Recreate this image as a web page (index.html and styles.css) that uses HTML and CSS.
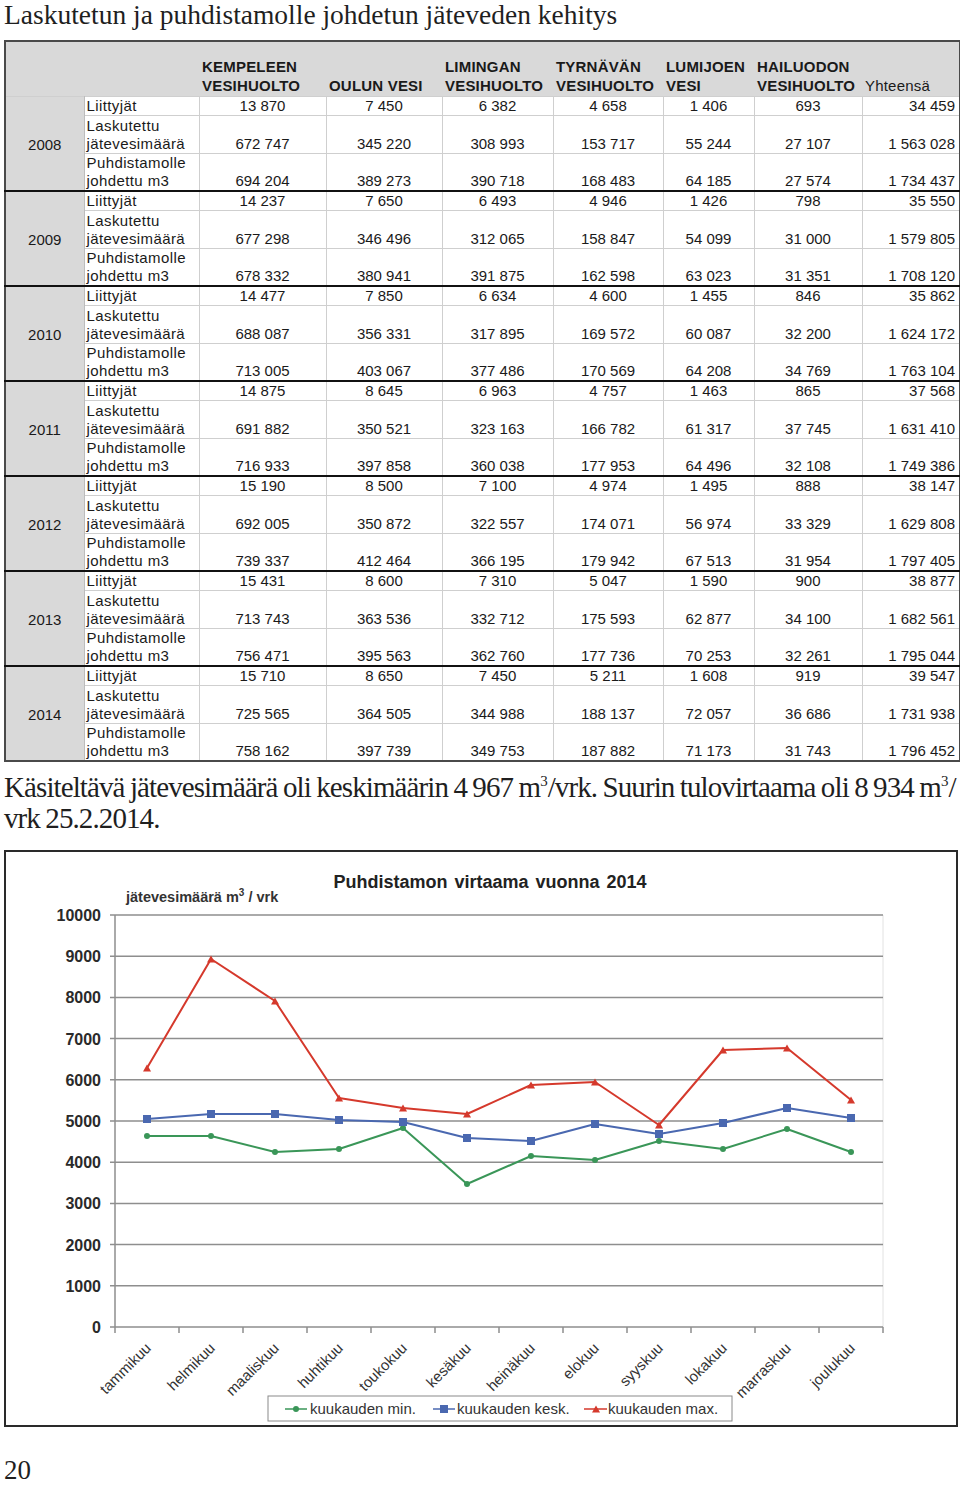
FILE: index.html
```html
<!DOCTYPE html>
<html lang="fi">
<head>
<meta charset="utf-8">
<title>Laskutetun ja puhdistamolle johdetun jäteveden kehitys</title>
<link rel="stylesheet" href="styles.css">
</head>
<body>
<div class="page">
  <h1 class="title">Laskutetun ja puhdistamolle johdetun jäteveden kehitys</h1>

  <table class="data">
    <colgroup>
      <col class="c-year"><col class="c-lbl"><col class="c-kem"><col class="c-oul"><col class="c-lim"><col class="c-tyr"><col class="c-lum"><col class="c-hai"><col class="c-tot">
    </colgroup>
    <thead>
      <tr>
        <th></th><th></th>
        <th>KEMPELEEN<br>VESIHUOLTO</th>
        <th>OULUN VESI</th>
        <th>LIMINGAN<br>VESIHUOLTO</th>
        <th>TYRNÄVÄN<br>VESIHUOLTO</th>
        <th>LUMIJOEN<br>VESI</th>
        <th>HAILUODON<br>VESIHUOLTO</th>
        <th class="tot-h">Yhteensä</th>
      </tr>
    </thead>
    <tbody class="grp">
      <tr class="r1"><td class="yr" rowspan="3">2008</td><td class="lbl">Liittyjät</td><td>13 870</td><td>7 450</td><td>6 382</td><td>4 658</td><td>1 406</td><td>693</td><td class="tot">34 459</td></tr>
      <tr class="r2"><td class="lbl">Laskutettu<br>jätevesimäärä</td><td>672 747</td><td>345 220</td><td>308 993</td><td>153 717</td><td>55 244</td><td>27 107</td><td class="tot">1 563 028</td></tr>
      <tr class="r3"><td class="lbl">Puhdistamolle<br>johdettu m3</td><td>694 204</td><td>389 273</td><td>390 718</td><td>168 483</td><td>64 185</td><td>27 574</td><td class="tot">1 734 437</td></tr>
    </tbody>
    <tbody class="grp">
      <tr class="r1"><td class="yr" rowspan="3">2009</td><td class="lbl">Liittyjät</td><td>14 237</td><td>7 650</td><td>6 493</td><td>4 946</td><td>1 426</td><td>798</td><td class="tot">35 550</td></tr>
      <tr class="r2"><td class="lbl">Laskutettu<br>jätevesimäärä</td><td>677 298</td><td>346 496</td><td>312 065</td><td>158 847</td><td>54 099</td><td>31 000</td><td class="tot">1 579 805</td></tr>
      <tr class="r3"><td class="lbl">Puhdistamolle<br>johdettu m3</td><td>678 332</td><td>380 941</td><td>391 875</td><td>162 598</td><td>63 023</td><td>31 351</td><td class="tot">1 708 120</td></tr>
    </tbody>
    <tbody class="grp">
      <tr class="r1"><td class="yr" rowspan="3">2010</td><td class="lbl">Liittyjät</td><td>14 477</td><td>7 850</td><td>6 634</td><td>4 600</td><td>1 455</td><td>846</td><td class="tot">35 862</td></tr>
      <tr class="r2"><td class="lbl">Laskutettu<br>jätevesimäärä</td><td>688 087</td><td>356 331</td><td>317 895</td><td>169 572</td><td>60 087</td><td>32 200</td><td class="tot">1 624 172</td></tr>
      <tr class="r3"><td class="lbl">Puhdistamolle<br>johdettu m3</td><td>713 005</td><td>403 067</td><td>377 486</td><td>170 569</td><td>64 208</td><td>34 769</td><td class="tot">1 763 104</td></tr>
    </tbody>
    <tbody class="grp">
      <tr class="r1"><td class="yr" rowspan="3">2011</td><td class="lbl">Liittyjät</td><td>14 875</td><td>8 645</td><td>6 963</td><td>4 757</td><td>1 463</td><td>865</td><td class="tot">37 568</td></tr>
      <tr class="r2"><td class="lbl">Laskutettu<br>jätevesimäärä</td><td>691 882</td><td>350 521</td><td>323 163</td><td>166 782</td><td>61 317</td><td>37 745</td><td class="tot">1 631 410</td></tr>
      <tr class="r3"><td class="lbl">Puhdistamolle<br>johdettu m3</td><td>716 933</td><td>397 858</td><td>360 038</td><td>177 953</td><td>64 496</td><td>32 108</td><td class="tot">1 749 386</td></tr>
    </tbody>
    <tbody class="grp">
      <tr class="r1"><td class="yr" rowspan="3">2012</td><td class="lbl">Liittyjät</td><td>15 190</td><td>8 500</td><td>7 100</td><td>4 974</td><td>1 495</td><td>888</td><td class="tot">38 147</td></tr>
      <tr class="r2"><td class="lbl">Laskutettu<br>jätevesimäärä</td><td>692 005</td><td>350 872</td><td>322 557</td><td>174 071</td><td>56 974</td><td>33 329</td><td class="tot">1 629 808</td></tr>
      <tr class="r3"><td class="lbl">Puhdistamolle<br>johdettu m3</td><td>739 337</td><td>412 464</td><td>366 195</td><td>179 942</td><td>67 513</td><td>31 954</td><td class="tot">1 797 405</td></tr>
    </tbody>
    <tbody class="grp">
      <tr class="r1"><td class="yr" rowspan="3">2013</td><td class="lbl">Liittyjät</td><td>15 431</td><td>8 600</td><td>7 310</td><td>5 047</td><td>1 590</td><td>900</td><td class="tot">38 877</td></tr>
      <tr class="r2"><td class="lbl">Laskutettu<br>jätevesimäärä</td><td>713 743</td><td>363 536</td><td>332 712</td><td>175 593</td><td>62 877</td><td>34 100</td><td class="tot">1 682 561</td></tr>
      <tr class="r3"><td class="lbl">Puhdistamolle<br>johdettu m3</td><td>756 471</td><td>395 563</td><td>362 760</td><td>177 736</td><td>70 253</td><td>32 261</td><td class="tot">1 795 044</td></tr>
    </tbody>
    <tbody class="grp">
      <tr class="r1"><td class="yr" rowspan="3">2014</td><td class="lbl">Liittyjät</td><td>15 710</td><td>8 650</td><td>7 450</td><td>5 211</td><td>1 608</td><td>919</td><td class="tot">39 547</td></tr>
      <tr class="r2"><td class="lbl">Laskutettu<br>jätevesimäärä</td><td>725 565</td><td>364 505</td><td>344 988</td><td>188 137</td><td>72 057</td><td>36 686</td><td class="tot">1 731 938</td></tr>
      <tr class="r3"><td class="lbl">Puhdistamolle<br>johdettu m3</td><td>758 162</td><td>397 739</td><td>349 753</td><td>187 882</td><td>71 173</td><td>31 743</td><td class="tot">1 796 452</td></tr>
    </tbody>
  </table>

  <p class="note"><span class="l1">Käsiteltävä jätevesimäärä oli keskimäärin 4 967 m<span class="sup">3</span>/vrk. Suurin tulovirtaama oli 8 934 m<span class="sup">3</span>/</span><br>vrk 25.2.2014.</p>

  <div class="chart">
    <svg class="plot" width="950" height="573" viewBox="6 853 950 573" xmlns="http://www.w3.org/2000/svg">
      <defs>
        <marker id="mk-tri" viewBox="0 0 10 10" refX="5" refY="5" markerWidth="9" markerHeight="9" markerUnits="userSpaceOnUse">
          <polygon points="5,1 9.5,9 0.5,9" fill="#d5392c"/>
        </marker>
        <marker id="mk-sq" viewBox="0 0 10 10" refX="5" refY="5" markerWidth="8" markerHeight="8" markerUnits="userSpaceOnUse">
          <rect x="0" y="0" width="10" height="10" fill="#4a68b0"/>
        </marker>
        <marker id="mk-dot" viewBox="0 0 10 10" refX="5" refY="5" markerWidth="6" markerHeight="6" markerUnits="userSpaceOnUse">
          <circle cx="5" cy="5" r="5" fill="#3a9658"/>
        </marker>
      </defs>

      <text class="ctitle" x="490" y="889" text-anchor="middle">Puhdistamon virtaama vuonna 2014</text>
      <text class="ylabel" x="126" y="903">jätevesimäärä m<tspan class="ysup" dy="-6">3</tspan><tspan dy="6"> / vrk</tspan></text>

      <line class="frame-r" x1="883" y1="916" x2="883" y2="1328"/>
      <g class="grid">
        <line x1="110" y1="916" x2="883" y2="916"/>
        <line x1="110" y1="957.2" x2="883" y2="957.2"/>
        <line x1="110" y1="998.4" x2="883" y2="998.4"/>
        <line x1="110" y1="1039.6" x2="883" y2="1039.6"/>
        <line x1="110" y1="1080.8" x2="883" y2="1080.8"/>
        <line x1="110" y1="1122" x2="883" y2="1122"/>
        <line x1="110" y1="1163.2" x2="883" y2="1163.2"/>
        <line x1="110" y1="1204.4" x2="883" y2="1204.4"/>
        <line x1="110" y1="1245.6" x2="883" y2="1245.6"/>
        <line x1="110" y1="1286.8" x2="883" y2="1286.8"/>
        <line x1="110" y1="1328" x2="883" y2="1328"/>
        <line x1="115" y1="916" x2="115" y2="1328"/>
      </g>
      <g class="ticks">
        <line x1="115" y1="1328" x2="115" y2="1334"/>
        <line x1="179" y1="1328" x2="179" y2="1334"/>
        <line x1="243" y1="1328" x2="243" y2="1334"/>
        <line x1="307" y1="1328" x2="307" y2="1334"/>
        <line x1="371" y1="1328" x2="371" y2="1334"/>
        <line x1="435" y1="1328" x2="435" y2="1334"/>
        <line x1="499" y1="1328" x2="499" y2="1334"/>
        <line x1="563" y1="1328" x2="563" y2="1334"/>
        <line x1="627" y1="1328" x2="627" y2="1334"/>
        <line x1="691" y1="1328" x2="691" y2="1334"/>
        <line x1="755" y1="1328" x2="755" y2="1334"/>
        <line x1="819" y1="1328" x2="819" y2="1334"/>
        <line x1="883" y1="1328" x2="883" y2="1334"/>
      </g>
      <g class="ytext">
        <text x="101" y="922">10000</text>
        <text x="101" y="963">9000</text>
        <text x="101" y="1004">8000</text>
        <text x="101" y="1046">7000</text>
        <text x="101" y="1087">6000</text>
        <text x="101" y="1128">5000</text>
        <text x="101" y="1169">4000</text>
        <text x="101" y="1210">3000</text>
        <text x="101" y="1252">2000</text>
        <text x="101" y="1293">1000</text>
        <text x="101" y="1334">0</text>
      </g>
      <g class="xtext">
        <text transform="translate(152 1350) rotate(-45)">tammikuu</text>
        <text transform="translate(216 1350) rotate(-45)">helmikuu</text>
        <text transform="translate(280 1350) rotate(-45)">maaliskuu</text>
        <text transform="translate(344 1350) rotate(-45)">huhtikuu</text>
        <text transform="translate(408 1350) rotate(-45)">toukokuu</text>
        <text transform="translate(472 1350) rotate(-45)">kesäkuu</text>
        <text transform="translate(536 1350) rotate(-45)">heinäkuu</text>
        <text transform="translate(600 1350) rotate(-45)">elokuu</text>
        <text transform="translate(664 1350) rotate(-45)">syyskuu</text>
        <text transform="translate(728 1350) rotate(-45)">lokakuu</text>
        <text transform="translate(792 1350) rotate(-45)">marraskuu</text>
        <text transform="translate(856 1350) rotate(-45)">joulukuu</text>
      </g>

      <polyline class="s-min" points="147,1137 211,1137 275,1153 339,1150 403,1129 467,1185 531,1157 595,1161 659,1142 723,1150 787,1130 851,1153"/>
      <polyline class="s-avg" points="147,1120 211,1115 275,1115 339,1121 403,1123 467,1139 531,1142 595,1125 659,1135 723,1124 787,1109 851,1119"/>
      <polyline class="s-max" points="147,1069 211,960 275,1002 339,1099 403,1109 467,1115 531,1086 595,1083 659,1126 723,1051 787,1049 851,1101"/>

      <rect class="legend-box" x="268" y="1397" width="464" height="25"/>
      <polyline class="s-min lg" points="285,1410 296,1410 307,1410"/>
      <text class="lgtext" x="310" y="1415">kuukauden min.</text>
      <polyline class="s-avg lg" points="433,1410 444,1410 455,1410"/>
      <text class="lgtext" x="457" y="1415">kuukauden kesk.</text>
      <polyline class="s-max lg" points="584,1410 596,1410 607,1410"/>
      <text class="lgtext" x="608" y="1415">kuukauden max.</text>
    </svg>
  </div>

  <div class="pageno">20</div>
</div>
</body>
</html>
```

FILE: styles.css
```css
html, body {
  margin: 0;
  padding: 0;
  background: #ffffff;
}

body {
  font-family: "Liberation Sans", Arial, sans-serif;
  color: #1e1e1e;
}

.page {
  width: 960px;
  padding: 0 0 0 4px;
  box-sizing: border-box;
}

.title {
  font-family: "Liberation Serif", "Times New Roman", serif;
  font-weight: normal;
  font-size: 27.5px;
  line-height: 30px;
  margin: 0 0 10px 0;
  color: #1f1f1f;
}

/* ---------- table ---------- */
.data {
  border-collapse: collapse;
  table-layout: fixed;
  width: 955px;
  border: 2px solid #4a4a4a;
  font-size: 15px;
  line-height: 18px;
  color: #1a1a1a;
}

.c-year { width: 79px; }
.c-lbl  { width: 115px; }
.c-kem  { width: 127px; }
.c-oul  { width: 116px; }
.c-lim  { width: 111px; }
.c-tyr  { width: 110px; }
.c-lum  { width: 91px; }
.c-hai  { width: 108px; }
.c-tot  { width: 98px; }

.data thead th {
  background: #d9d9d9;
  height: 53px;
  line-height: 19px;
  vertical-align: bottom;
  text-align: left;
  font-weight: bold;
  letter-spacing: 0.2px;
  padding: 0 0 1px 3px;
  white-space: nowrap;
  border: none;
}

.data thead th.tot-h {
  font-weight: normal;
  padding-left: 3px;
}

.data td {
  padding: 0;
  text-align: center;
  vertical-align: bottom;
  border: 1px solid #cfcfcf;
  white-space: nowrap;
}

.data tr.r2 td {
  padding-top: 1px;
}

.data td.yr {
  background: #d9d9d9;
  vertical-align: middle;
  text-align: center;
  border-left: none;
  border-right: 1px solid #bdbdbd;
  padding-top: 2px;
}

.data td.lbl {
  text-align: left;
  padding-left: 2px;
  letter-spacing: 0.4px;
}

.data td.tot {
  text-align: right;
  padding-right: 4px;
}

.data tbody.grp + tbody.grp td {
  border-top: 2px solid #111111;
}

.data tbody.grp + tbody.grp tr.r2 td,
.data tbody.grp + tbody.grp tr.r3 td {
  border-top: 1px solid #cfcfcf;
}

/* ---------- paragraph ---------- */
.note {
  font-family: "Liberation Serif", "Times New Roman", serif;
  font-size: 29px;
  line-height: 31px;
  letter-spacing: -0.9px;
  word-spacing: -1px;
  margin: 10px 0 0 0;
  color: #1f1f1f;
}

.note .l1 {
  white-space: nowrap;
}

.note .sup {
  font-size: 15px;
  line-height: 0;
  vertical-align: 11px;
  letter-spacing: 0;
}

/* ---------- chart ---------- */
.chart {
  margin-top: 16px;
  width: 954px;
  box-sizing: border-box;
  border: 2px solid #2a2a2a;
}

.plot {
  display: block;
  font-family: "Liberation Sans", Arial, sans-serif;
}

.ctitle {
  font-size: 18px;
  font-weight: bold;
  word-spacing: 2px;
  fill: #222222;
}

.ylabel {
  font-size: 14.5px;
  font-weight: bold;
  fill: #333333;
}

.ysup {
  font-size: 10px;
}

.grid line {
  stroke: #8e8e8e;
  stroke-width: 1.5;
}

.ticks line {
  stroke: #8e8e8e;
  stroke-width: 1.5;
}

.frame-r {
  stroke: #e2e2e2;
  stroke-width: 1;
}

.ytext text {
  font-size: 16px;
  font-weight: bold;
  fill: #2a2a2a;
  text-anchor: end;
}

.xtext text {
  font-size: 15px;
  fill: #333333;
  text-anchor: end;
}

.s-min, .s-avg, .s-max {
  fill: none;
  stroke-width: 2;
  stroke-linejoin: round;
}

.s-min {
  stroke: #3a9658;
  marker-start: url(#mk-dot);
  marker-mid: url(#mk-dot);
  marker-end: url(#mk-dot);
}

.s-avg {
  stroke: #4a68b0;
  marker-start: url(#mk-sq);
  marker-mid: url(#mk-sq);
  marker-end: url(#mk-sq);
}

.s-max {
  stroke: #d5392c;
  marker-start: url(#mk-tri);
  marker-mid: url(#mk-tri);
  marker-end: url(#mk-tri);
}

.lg {
  marker-start: none;
  marker-end: none;
  stroke-width: 1.5;
}

.legend-box {
  fill: #ffffff;
  stroke: #8a8a8a;
  stroke-width: 1;
}

.lgtext {
  font-size: 15px;
  fill: #333333;
}

/* ---------- page number ---------- */
.pageno {
  font-family: "Liberation Serif", "Times New Roman", serif;
  font-size: 27px;
  line-height: 30px;
  margin-top: 28px;
  color: #1f1f1f;
}
```
